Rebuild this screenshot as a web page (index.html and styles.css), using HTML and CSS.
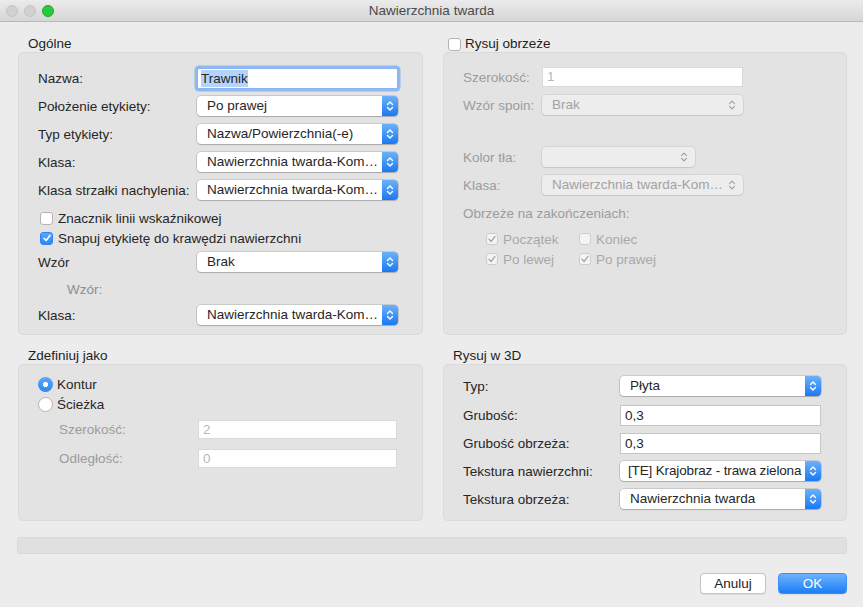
FILE: index.html
```html
<!DOCTYPE html>
<html lang="pl">
<head>
<meta charset="utf-8">
<title>Nawierzchnia twarda</title>
<link rel="stylesheet" href="styles.css">
</head>
<body>
<div class="window">
  <div class="titlebar">
    <div class="lights"><span class="light gray"></span><span class="light gray"></span><span class="light green"></span></div>
    <div class="title">Nawierzchnia twarda</div>
    <div></div>
  </div>

  <div class="content">
    <section class="group">
      <div class="group-title">Ogólne</div>
      <div class="box box-top left-top">
        <div class="row">
          <label>Nazwa:</label>
          <div class="field focus"><span class="sel">Trawnik</span></div>
        </div>
        <div class="row">
          <label>Położenie etykiety:</label>
          <div class="popup"><span class="pv">Po prawej</span><span class="chev"><svg width="8" height="12" viewBox="0 0 8 12"><path d="M1.5 4.6 4 2.1 6.5 4.6M1.5 7.4 4 9.9 6.5 7.4"/></svg></span></div>
        </div>
        <div class="row">
          <label>Typ etykiety:</label>
          <div class="popup"><span class="pv">Nazwa/Powierzchnia(-e)</span><span class="chev"><svg width="8" height="12" viewBox="0 0 8 12"><path d="M1.5 4.6 4 2.1 6.5 4.6M1.5 7.4 4 9.9 6.5 7.4"/></svg></span></div>
        </div>
        <div class="row">
          <label>Klasa:</label>
          <div class="popup"><span class="pv">Nawierzchnia twarda-Kom…</span><span class="chev"><svg width="8" height="12" viewBox="0 0 8 12"><path d="M1.5 4.6 4 2.1 6.5 4.6M1.5 7.4 4 9.9 6.5 7.4"/></svg></span></div>
        </div>
        <div class="row">
          <label>Klasa strzałki nachylenia:</label>
          <div class="popup"><span class="pv">Nawierzchnia twarda-Kom…</span><span class="chev"><svg width="8" height="12" viewBox="0 0 8 12"><path d="M1.5 4.6 4 2.1 6.5 4.6M1.5 7.4 4 9.9 6.5 7.4"/></svg></span></div>
        </div>
        <div class="check first">
          <span class="cb"></span><span>Znacznik linii wskaźnikowej</span>
        </div>
        <div class="check">
          <span class="cb on"><svg width="10" height="10" viewBox="0 0 10 10"><path d="M2 5.3 4.1 7.5 8 2.4"/></svg></span><span>Snapuj etykietę do krawędzi nawierzchni</span>
        </div>
        <div class="row">
          <label>Wzór</label>
          <div class="popup"><span class="pv">Brak</span><span class="chev"><svg width="8" height="12" viewBox="0 0 8 12"><path d="M1.5 4.6 4 2.1 6.5 4.6M1.5 7.4 4 9.9 6.5 7.4"/></svg></span></div>
        </div>
        <div class="sublabel">Wzór:</div>
        <div class="row">
          <label>Klasa:</label>
          <div class="popup"><span class="pv">Nawierzchnia twarda-Kom…</span><span class="chev"><svg width="8" height="12" viewBox="0 0 8 12"><path d="M1.5 4.6 4 2.1 6.5 4.6M1.5 7.4 4 9.9 6.5 7.4"/></svg></span></div>
        </div>
      </div>
    </section>

    <section class="group">
      <div class="group-title check-title">
        <span class="cb"></span><span>Rysuj obrzeże</span>
      </div>
      <div class="box box-top right-top">
        <div class="rrow">
          <label class="dim">Szerokość:</label>
          <div class="field disabled">1</div>
        </div>
        <div class="rrow">
          <label class="dim">Wzór spoin:</label>
          <div class="popup off"><span class="pv">Brak</span><span class="chev-off"><svg width="8" height="12" viewBox="0 0 8 12"><path d="M1.5 4.6 4 2.1 6.5 4.6M1.5 7.4 4 9.9 6.5 7.4"/></svg></span></div>
        </div>
        <div class="rrow spaced">
          <label class="dim">Kolor tła:</label>
          <div class="popup off short"><span class="pv"></span><span class="chev-off"><svg width="8" height="12" viewBox="0 0 8 12"><path d="M1.5 4.6 4 2.1 6.5 4.6M1.5 7.4 4 9.9 6.5 7.4"/></svg></span></div>
        </div>
        <div class="rrow">
          <label class="dim">Klasa:</label>
          <div class="popup off"><span class="pv">Nawierzchnia twarda-Kom…</span><span class="chev-off"><svg width="8" height="12" viewBox="0 0 8 12"><path d="M1.5 4.6 4 2.1 6.5 4.6M1.5 7.4 4 9.9 6.5 7.4"/></svg></span></div>
        </div>
        <div class="ends-title dim">Obrzeże na zakończeniach:</div>
        <div class="ends">
          <div class="dcheck"><span class="cb dis"><svg width="10" height="10" viewBox="0 0 10 10"><path d="M2 5.3 4.1 7.5 8 2.4"/></svg></span><span>Początek</span></div>
          <div class="dcheck"><span class="cb dis"></span><span>Koniec</span></div>
          <div class="dcheck"><span class="cb dis"><svg width="10" height="10" viewBox="0 0 10 10"><path d="M2 5.3 4.1 7.5 8 2.4"/></svg></span><span>Po lewej</span></div>
          <div class="dcheck"><span class="cb dis"><svg width="10" height="10" viewBox="0 0 10 10"><path d="M2 5.3 4.1 7.5 8 2.4"/></svg></span><span>Po prawej</span></div>
        </div>
      </div>
    </section>

    <section class="group">
      <div class="group-title">Zdefiniuj jako</div>
      <div class="box box-bottom left-bottom">
        <div class="radio-row"><span class="radio on"></span><span>Kontur</span></div>
        <div class="radio-row"><span class="radio"></span><span>Ścieżka</span></div>
        <div class="srow first">
          <label class="dim">Szerokość:</label>
          <div class="field disabled">2</div>
        </div>
        <div class="srow">
          <label class="dim">Odległość:</label>
          <div class="field disabled">0</div>
        </div>
      </div>
    </section>

    <section class="group">
      <div class="group-title">Rysuj w 3D</div>
      <div class="box box-bottom right-bottom">
        <div class="brow tall">
          <label>Typ:</label>
          <div class="popup"><span class="pv">Płyta</span><span class="chev"><svg width="8" height="12" viewBox="0 0 8 12"><path d="M1.5 4.6 4 2.1 6.5 4.6M1.5 7.4 4 9.9 6.5 7.4"/></svg></span></div>
        </div>
        <div class="brow">
          <label>Grubość:</label>
          <div class="field plain">0,3</div>
        </div>
        <div class="brow">
          <label>Grubość obrzeża:</label>
          <div class="field plain">0,3</div>
        </div>
        <div class="brow">
          <label>Tekstura nawierzchni:</label>
          <div class="popup"><span class="pv tight">[TE] Krajobraz - trawa zielona</span><span class="chev"><svg width="8" height="12" viewBox="0 0 8 12"><path d="M1.5 4.6 4 2.1 6.5 4.6M1.5 7.4 4 9.9 6.5 7.4"/></svg></span></div>
        </div>
        <div class="brow">
          <label>Tekstura obrzeża:</label>
          <div class="popup"><span class="pv">Nawierzchnia twarda</span><span class="chev"><svg width="8" height="12" viewBox="0 0 8 12"><path d="M1.5 4.6 4 2.1 6.5 4.6M1.5 7.4 4 9.9 6.5 7.4"/></svg></span></div>
        </div>
      </div>
    </section>
  </div>

  <div class="status"></div>

  <div class="buttons">
    <button class="btn">Anuluj</button>
    <button class="btn primary">OK</button>
  </div>
</div>
</body>
</html>
```

FILE: styles.css
```css
* { box-sizing: border-box; }

html, body {
  margin: 0;
  padding: 0;
  background: #ececec;
}

body {
  font-family: "Liberation Sans", Arial, sans-serif;
  font-size: 13.5px;
  color: #262626;
  width: 863px;
  height: 607px;
  overflow: hidden;
}

.titlebar {
  height: 22px;
  display: grid;
  grid-template-columns: 1fr auto 1fr;
  align-items: center;
  background: linear-gradient(#ebebeb, #d6d6d6);
  border-bottom: 1px solid #b8b8b8;
}

.lights {
  display: flex;
  gap: 6px;
  padding-left: 6px;
}

.light {
  width: 12px;
  height: 12px;
  border-radius: 50%;
}

.light.gray {
  background: #d1d1d1;
  border: 1px solid #c4c4c4;
}

.light.green {
  background: #2ac840;
  border: 1px solid #1faa2e;
}

.title {
  color: #4a4a4a;
  font-size: 13.5px;
}

.content {
  display: grid;
  grid-template-columns: 405px 404px;
  column-gap: 20px;
  row-gap: 13px;
  padding: 14px 0 0 18px;
}

.group-title {
  height: 16px;
  line-height: 16px;
  padding-left: 10px;
  color: #1e1e1e;
}

.check-title {
  display: flex;
  align-items: center;
  gap: 4px;
  padding-left: 5px;
}

.box {
  background: #e3e3e3;
  border: 1px solid #dadada;
  border-radius: 5px;
}

.box-top { height: 283px; }
.box-bottom { height: 157px; }

.row {
  display: grid;
  grid-template-columns: 159px 201px;
  align-items: center;
  height: 28px;
}

.left-top { padding: 11px 0 0 19px; }

label { white-space: nowrap; }

.dim { color: #9c9c9c; }

.field {
  height: 20px;
  line-height: 18px;
  background: #fff;
  border: 1px solid #cbcbcb;
  padding-left: 3px;
  white-space: nowrap;
}

.field.focus {
  height: 21px;
  border: 1px solid #8ab4ef;
  box-shadow: 0 0 0 2.5px #8fb9f2;
  border-radius: 2px;
  line-height: 19px;
}

.sel {
  background: #b4d4fc;
  padding: 1px 0;
}

.field.disabled {
  color: #b8b8b8;
  border-color: #d9d9d9;
  padding-left: 4px;
}

.field.plain {
  border-color: #c6c6c6;
  padding-left: 4px;
}

.popup {
  display: flex;
  height: 20px;
  background: #fff;
  border-radius: 4px;
  box-shadow: 0 0 0 0.6px rgba(0, 0, 0, 0.22), 0 1px 1px rgba(0, 0, 0, 0.16);
  overflow: hidden;
}

.pv {
  flex: 1;
  min-width: 0;
  padding-left: 10px;
  line-height: 20px;
  white-space: nowrap;
  overflow: hidden;
}

.pv.tight {
  padding-left: 8px;
  letter-spacing: -0.15px;
}

.chev {
  flex: none;
  width: 16px;
  display: flex;
  align-items: center;
  justify-content: center;
  background: linear-gradient(#6ab2fa, #1b78f4);
}

.chev svg path {
  fill: none;
  stroke: #fff;
  stroke-width: 1.4;
  stroke-linecap: round;
  stroke-linejoin: round;
}

.popup.off {
  background: #ededed;
  box-shadow: 0 0 0 0.6px rgba(0, 0, 0, 0.12), 0 1px 1px rgba(0, 0, 0, 0.07);
  color: #a3a3a3;
}

.popup.short { width: 153px; }

.chev-off {
  flex: none;
  width: 18px;
  padding-right: 4px;
  display: flex;
  align-items: center;
  justify-content: center;
}

.chev-off svg path {
  fill: none;
  stroke: #9d9d9d;
  stroke-width: 1.1;
  stroke-linecap: round;
  stroke-linejoin: round;
}

.cb {
  flex: none;
  width: 13px;
  height: 13px;
  border-radius: 3px;
  background: #fff;
  border: 1px solid #b4b4b4;
  display: flex;
  align-items: center;
  justify-content: center;
}

.cb.on {
  background: linear-gradient(#5aa6f8, #2d87f4);
  border-color: #2f86ee;
}

.cb svg path {
  fill: none;
  stroke: #fff;
  stroke-width: 1.6;
  stroke-linecap: round;
  stroke-linejoin: round;
}

.cb.dis {
  background: #f4f4f4;
  border-color: #cdcdcd;
}

.cb.dis svg path { stroke: #a6a6a6; stroke-width: 1.3; }

.check {
  display: flex;
  align-items: center;
  gap: 5px;
  height: 20px;
  padding-left: 2px;
}

.check.first { margin-top: 4px; }

.sublabel {
  height: 22px;
  line-height: 22px;
  margin-top: 3px;
  padding-left: 29px;
  color: #8e8e8e;
}

.right-top { padding: 10px 0 0 19px; }

.rrow {
  display: grid;
  grid-template-columns: 79px 201px;
  align-items: center;
  height: 28px;
}

.rrow.spaced { margin-top: 24px; }

.ends-title {
  height: 30px;
  line-height: 30px;
}

.ends {
  display: grid;
  grid-template-columns: 93px auto;
  padding-left: 23px;
  color: #a8a8a8;
}

.dcheck {
  display: flex;
  align-items: center;
  gap: 5px;
  height: 20px;
}

.dcheck .cb { width: 12px; height: 12px; }

.left-bottom { padding: 9px 0 0 19px; }

.radio-row {
  display: flex;
  align-items: center;
  gap: 4px;
  height: 20px;
}

.radio {
  flex: none;
  width: 15px;
  height: 15px;
  border-radius: 50%;
  background: #fff;
  border: 1px solid #b3b3b3;
}

.radio.on {
  border: none;
  background: radial-gradient(circle, #fff 0 2.4px, transparent 2.9px), linear-gradient(#5ba8f8, #2b86f4);
}

.srow {
  display: grid;
  grid-template-columns: 139px 199px;
  align-items: center;
  height: 29px;
  padding-left: 21px;
}

.srow.first { margin-top: 1px; }

.srow .field { height: 19px; line-height: 17px; }

.right-bottom { padding: 6px 0 0 19px; }

.brow {
  display: grid;
  grid-template-columns: 157px 201px;
  align-items: center;
  height: 28px;
}

.brow.tall { height: 30px; }

.brow .field { height: 21px; line-height: 19px; }

.status {
  margin: 16px 16px 0 17px;
  height: 17px;
  background: #e0e0e0;
  border: 1px solid #dadada;
  border-radius: 3px;
}

.buttons {
  display: flex;
  justify-content: flex-end;
  gap: 12px;
  margin-top: 19px;
  padding-right: 16px;
}

.btn {
  font-family: "Liberation Sans", Arial, sans-serif;
  font-size: 13.5px;
  height: 21px;
  width: 66px;
  padding: 0;
  background: #fff;
  color: #222;
  border: 1px solid #c3c3c3;
  border-radius: 4px;
  box-shadow: 0 1px 1px rgba(0, 0, 0, 0.08);
}

.btn.primary {
  width: 69px;
  color: #fff;
  border-color: #3c8ff5;
  background: linear-gradient(#6cb3fb, #1c7ef6);
}
```
